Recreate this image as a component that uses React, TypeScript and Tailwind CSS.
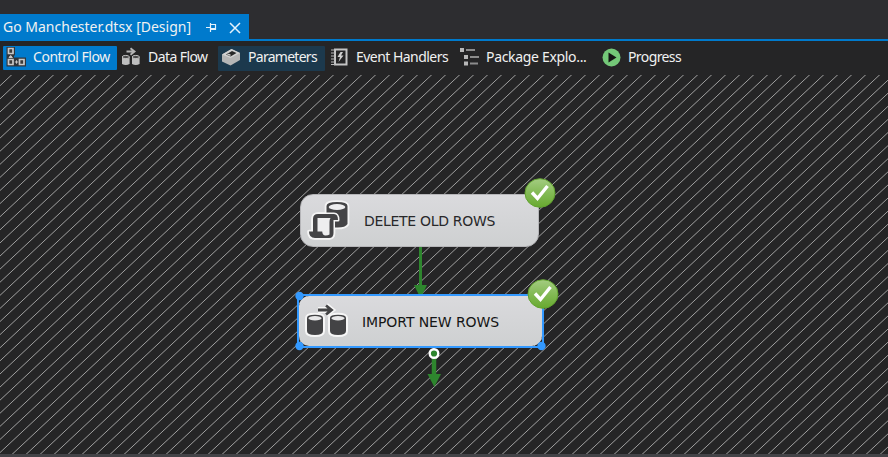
import type { ReactNode } from "react";

function ControlFlowIcon() {
  return (
    <svg width="20" height="20" viewBox="0 0 20 20" fill="none">
      <path d="M.5 0H9v8.500H8v2h12v9H.5z" fill="#30353a" />
      <path d="M2.500 1.500h4.500v5H2.500zM2.500 12.500h4.500v5H2.500zM13.500 12.500h4.500v5h-4.500z" stroke="#c8c8c8" strokeWidth="1.700" fill="#3a3a3a" />
      <path d="M4.700 8.500l1.700 2H3zM8.800 15h3.400M10.500 13.300v3.400" fill="#d0d0d0" stroke="#c8c8c8" strokeWidth="1" />
    </svg>
  );
}

function DataFlowIcon() {
  return (
    <svg width="20" height="20" viewBox="0 0 20 20" fill="none">
      <path d="M5.500 4.500h7.500M9.500 1.300l4 3.200-4 3.200" stroke="#b4b4b4" strokeWidth="1.900" />
      <path d="M1 10v7q3.800 2.200 7.600 0v-7zM11 10v7q3.800 2.200 7.600 0v-7z" fill="#bebebe" />
      <ellipse cx="4.800" cy="10" rx="3.600" ry="1.600" fill="#4a4a4a" stroke="#bebebe" />
      <ellipse cx="14.800" cy="10" rx="3.600" ry="1.600" fill="#4a4a4a" stroke="#bebebe" />
    </svg>
  );
}

function ParametersIcon() {
  return (
    <svg width="20" height="18" viewBox="0 0 20 18">
      <path d="M1 6.500L10.500 1 19 5v7l-9.500 5.500L1 13.500z" fill="#b6b6b6" />
      <path d="M1 6.500L10.500 1 19 5 9.500 10z" fill="#d2d2d2" />
      <path d="M5 6.500L11 3l4.500 2-6 3.500z" fill="#292929" />
      <path d="M6 6.800q1-2 3.500-.5v1.800z" fill="#c8c8c8" />
    </svg>
  );
}

function EventIcon() {
  return (
    <svg width="17" height="18" viewBox="0 0 17 18" fill="none">
      <path d="M4 1.500h11.500v15H4z" stroke="#c4c4c4" strokeWidth="2" />
      <path d="M0 2h4M0 5h4M0 8h4M0 11h4M0 14h4M0 16.500h4" stroke="#b8b8b8" strokeWidth="1.200" />
      <path d="M9.500 4L6.500 9h2.500l-1.500 5L12.500 7.500H10L12 4z" fill="#d0d0d0" />
    </svg>
  );
}

function ExplorerIcon() {
  return (
    <svg width="20" height="18" viewBox="0 0 20 18">
      <path d="M0 0h4v4H0zM4 7h4v4H4zM4 13.500h4v4H4z" fill="#b8b8b8" />
      <path d="M6 1h9v2H6zM10 8h9v2h-9zM10 14.500h8v2h-8z" fill="#8c8c8c" />
    </svg>
  );
}

function ProgressIcon() {
  return (
    <svg width="19" height="19" viewBox="0 0 19 19">
      <circle cx="9.500" cy="9.500" r="9" fill="#74c878" />
      <path d="M6.500 4.500v10l8-5z" fill="#141414" />
    </svg>
  );
}

function Check({ id }: { id: string }) {
  return (
    <svg width="32" height="30" viewBox="0 0 32 30">
      <defs>
        <linearGradient id={id} x1="0" y1="0" x2="0" y2="1">
          <stop offset="0" stopColor="#a4cc82" />
          <stop offset=".5" stopColor="#83ba55" />
          <stop offset="1" stopColor="#67a92f" />
        </linearGradient>
      </defs>
      <ellipse cx="16" cy="15" rx="15" ry="14.300" fill={`url(#${id})`} stroke="#62a330" />
      <path d="M8 14.500l5.500 6L23.500 8" fill="none" stroke="#fff" strokeWidth="3.400" />
    </svg>
  );
}

function ScriptIcon() {
  const cylinder = "M19.500 6q0-4 10.500-4t10.500 4V24q-2 3.500-10 3.500h-11z";
  const scroll = "M27 14H11q-5 0-5 5v12.500H2q0 6.500 6 6.500h14q4.500 0 4.500-5V20H31q0-6-4-6z";
  return (
    <svg width="44" height="42" viewBox="0 0 44 42" strokeLinejoin="round">
      <path d={cylinder} fill="#f4f4f4" stroke="#f4f4f4" strokeWidth="3.600" />
      <path d={scroll} fill="#f4f4f4" stroke="#f4f4f4" strokeWidth="3.600" />
      <path d={cylinder} fill="#444446" />
      <ellipse cx="30" cy="7" rx="8.300" ry="3" fill="#eeeeef" />
      <path d={scroll} fill="none" stroke="#f4f4f4" strokeWidth="3" />
      <path d={scroll} fill="#444446" />
      <path d="M10.500 18h13q-1 1.500-1 4v12.500q-1.500 1-4 1-3 0-3.300-4h-4.700z" fill="#eeeeef" />
    </svg>
  );
}

function TransferIcon() {
  const left = "M2 14q0-3.200 8-3.200t8 3.200v13q0 4-8 4t-8-4z";
  const right = "M25 14q0-3.200 8-3.200t8 3.200v13q0 4-8 4t-8-4z";
  return (
    <svg width="46" height="37" viewBox="-1 -1 46 37" fill="none">
      <path d={left} fill="#f6f6f6" stroke="#f6f6f6" strokeWidth="4" />
      <path d={right} fill="#f6f6f6" stroke="#f6f6f6" strokeWidth="4" />
      <path d="M13 6h13M21 1.500L26.500 6 21 10.500" stroke="#f6f6f6" strokeWidth="6" />
      <path d={left} fill="#434345" />
      <path d={right} fill="#434345" />
      <ellipse cx="10" cy="14.300" rx="6.600" ry="2.200" fill="#e8e8e9" />
      <ellipse cx="33" cy="14.300" rx="6.600" ry="2.200" fill="#e8e8e9" />
      <path d="M13 6h13M21 1.500L26.500 6 21 10.500" stroke="#434345" strokeWidth="2.800" />
    </svg>
  );
}

function Tab({ className, icon, label, text }: { className: string; icon: ReactNode; label: string; text: string }) {
  return (
    <div className={`flex shrink-0 items-center ${className}`}>
      <span className="-mt-0.5 flex w-5 shrink-0 justify-center">{icon}</span>
      <span className={`-mt-0.5 whitespace-nowrap text-[14px] leading-[22px] ${text}`}>{label}</span>
    </div>
  );
}

const stripes = Array.from({ length: 93 }, (_, i) => `M${12 + i * 14} -0.5l-406.600 380.500`).join("");

export default function App() {
  return (
    <div className="flex h-[457px] w-[888px] flex-col overflow-hidden bg-[#252526] font-['Noto_Sans',sans-serif] text-[#f1f1f1]">
      <header className="flex h-[41px] items-end border-b-2 border-[#007acc] bg-[#2d2d30]">
        <div className="flex h-[25px] w-[249px] items-center bg-[#007acc] pl-[3px]">
          <span className="w-[203px] whitespace-nowrap pt-px text-[14px] leading-6">Go Manchester.dtsx [Design]</span>
          <svg width="11" height="10" viewBox="0 0 11 10" fill="none" stroke="#e4f2fc" className="mt-0.5">
            <path d="M0 4.500h4M4.500 0v9M5 1.500h4.500v5H5M5 5.500h5" strokeWidth="1.200" />
          </svg>
          <svg width="12" height="12" viewBox="0 0 12 12" fill="none" stroke="#e4f2fc" strokeWidth="1.500" className="ml-[12px] mt-0.5">
            <path d="M1 1l10 10M11 1L1 11" />
          </svg>
        </div>
      </header>

      <nav className="flex h-[34px] items-start pl-[3px] pt-[5px]">
        <Tab className="h-6 w-[114px] gap-[7px] rounded-[1px] bg-[#007acc] pl-[3px]" icon={<ControlFlowIcon />} label="Control Flow" text="tracking-[-0.46px]" />
        <Tab className="h-6 w-[101px] gap-[7px] pl-1" icon={<DataFlowIcon />} label="Data Flow" text="tracking-[-0.58px]" />
        <Tab className="h-[25px] w-[107px] gap-[7px] rounded-[1px] bg-[#1c394d] pb-px pl-[3px]" icon={<ParametersIcon />} label="Parameters" text="tracking-[-0.72px]" />
        <Tab className="h-6 w-[129px] gap-[7px] pl-1" icon={<EventIcon />} label="Event Handlers" text="tracking-[-0.54px]" />
        <Tab className="h-6 w-[144px] gap-[6px] pl-[6px]" icon={<ExplorerIcon />} label="Package Explo..." text="tracking-[-0.32px]" />
        <Tab className="h-6 gap-[7px] pl-[3px]" icon={<ProgressIcon />} label="Progress" text="tracking-[-0.6px]" />
      </nav>

      <main className="relative h-[379px] overflow-hidden font-['DejaVu_Sans',sans-serif]">
        <svg className="absolute inset-0" width="888" height="379">
          <path d={stripes} stroke="#a0a0a0" strokeWidth="1" />
          <path d="M420.500 171v42" stroke="#2e862e" strokeWidth="3" />
          <path d="M414 210h13l-4.500 9h-4z" fill="#2e862e" />
        </svg>

        <section className="absolute left-[300px] top-[119px] flex h-[53px] w-[239px] items-center rounded-[13px] border border-[#b5b5b8] bg-linear-to-b from-[#dadadd] to-[#ced0d1] pl-[6px] text-[#28282a]">
          <ScriptIcon />
          <span className="ml-[13px] whitespace-nowrap text-[14px] leading-5 tracking-[-0.3px]">DELETE OLD ROWS</span>
        </section>
        <div className="absolute left-[524px] top-[103px]"><Check id="check-delete" /></div>

        <section className="absolute left-[297px] top-[219px] h-[54px] w-[247px] border-2 border-[#3399ff]">
          <div className="flex h-[50px] items-center rounded-[10px] bg-linear-to-b from-[#dadadd] to-[#ced0d1] pl-[5px] text-[#151515]">
            <TransferIcon />
            <span className="ml-[12px] mt-0.5 whitespace-nowrap text-[14px] leading-5 tracking-[-0.1px]">IMPORT NEW ROWS</span>
          </div>
        </section>
        <svg className="absolute left-[290px] top-[210px]" width="265" height="110">
          <g fill="#3399ff">
            <circle cx="9.500" cy="11" r="4.200" />
            <circle cx="9.500" cy="61" r="4.200" />
            <circle cx="251.500" cy="61" r="4.200" />
          </g>
          <path d="M144 73v18" stroke="#2e862e" strokeWidth="4.500" />
          <path d="M137.500 89h13.500L144.300 102z" fill="#2e862e" />
          <circle cx="144" cy="68.500" r="4.300" fill="#2e862e" stroke="#fff" strokeWidth="2.400" />
        </svg>
        <div className="absolute left-[527px] top-[204px]"><Check id="check-import" /></div>
      </main>
      <footer className="h-[3px] bg-[#434347]" />
    </div>
  );
}
